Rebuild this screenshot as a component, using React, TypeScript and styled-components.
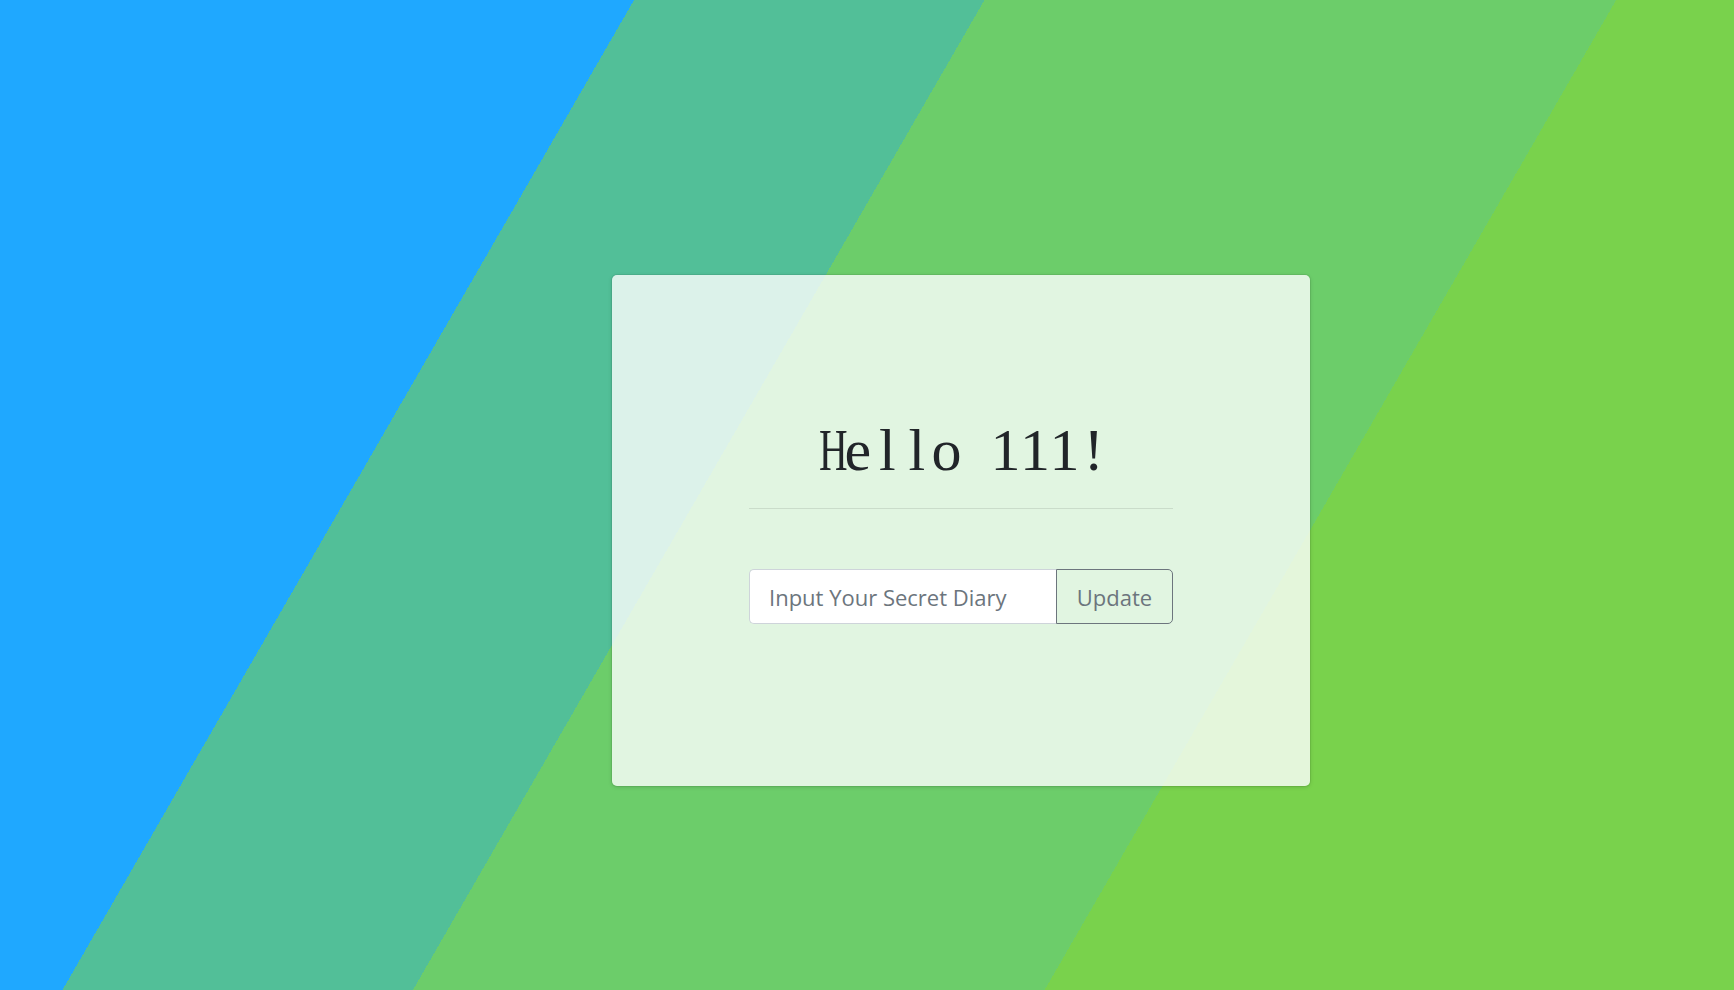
import React from "react";
import styled, { createGlobalStyle } from "styled-components";

const GlobalStyle = createGlobalStyle`
  html, body {
    margin: 0;
    padding: 0;
    height: 100%;
  }
  body {
    font-family: "Open Sans", "Noto Sans", sans-serif;
    overflow: hidden;
  }
  * { box-sizing: border-box; }
`;

const Page = styled.div`
  width: 100vw;
  height: 100vh;
  padding: 275px 0 0 612px;
  background: linear-gradient(
    120deg,
    #1fa8ff 0%,
    #1fa8ff 27.5%,
    #52bf98 27.5%,
    #52bf98 42.7%,
    #6ccd6a 42.7%,
    #6ccd6a 70.1%,
    #79d24c 70.1%,
    #79d24c 100%
  );
`;

const Card = styled.div`
  width: 698px;
  height: 511px;
  padding: 139px 137px 0 137px;
  background: rgba(255, 255, 255, 0.8);
  border-radius: 5px;
  box-shadow: 0 0 0 1px rgba(0, 0, 0, 0.06), 0 1px 4px rgba(0, 0, 0, 0.15);
  display: flex;
  flex-direction: column;
`;

const Title = styled.h1`
  margin: 0;
  font-family: "Liberation Serif", "Times New Roman", serif;
  font-weight: 400;
  font-size: 60px;
  line-height: 72px;
  color: #212529;
  text-align: center;
  white-space: nowrap;
`;

const Glyph = styled.span<{ $narrow?: boolean }>`
  display: inline-block;
  width: 29.5px;
  text-align: center;
  transform: ${(p) => (p.$narrow ? "scaleX(0.66)" : "none")};
`;

const Rule = styled.hr`
  margin: 22px 0 0;
  border: 0;
  border-top: 1px solid rgba(0, 0, 0, 0.1);
  height: 0;
`;

const InputGroup = styled.div`
  display: flex;
  margin-top: 60px;
  height: 55px;
  width: 424px;
`;

const DiaryInput = styled.input`
  flex: 0 0 307px;
  width: 307px;
  height: 100%;
  padding: 0 19px;
  border: 1px solid #ced4da;
  border-right: 0;
  border-radius: 5px 0 0 5px;
  background: #fff;
  font-family: "Open Sans", "Noto Sans", sans-serif;
  font-size: 22px;
  color: #495057;
  outline: none;
  &::placeholder {
    color: #6c757d;
    opacity: 1;
  }
`;

const UpdateButton = styled.button`
  flex: 0 0 117px;
  width: 117px;
  height: 100%;
  padding: 0;
  border: 1px solid #6c757d;
  border-radius: 0 5px 5px 0;
  background: transparent;
  font-family: "Open Sans", "Noto Sans", sans-serif;
  font-size: 22px;
  color: #6c757d;
  text-align: center;
  cursor: pointer;
`;

const titleText = "Hello 111!";

export default function App() {
  return (
    <>
      <GlobalStyle />
      <Page>
        <Card>
          <Title aria-label={titleText}>
            {titleText.split("").map((ch, i) => (
              <Glyph key={i} $narrow={ch === "H"}>
                {ch === " " ? "\u00a0" : ch}
              </Glyph>
            ))}
          </Title>
          <Rule />
          <InputGroup>
            <DiaryInput placeholder="Input Your Secret Diary" />
            <UpdateButton>Update</UpdateButton>
          </InputGroup>
        </Card>
      </Page>
    </>
  );
}
